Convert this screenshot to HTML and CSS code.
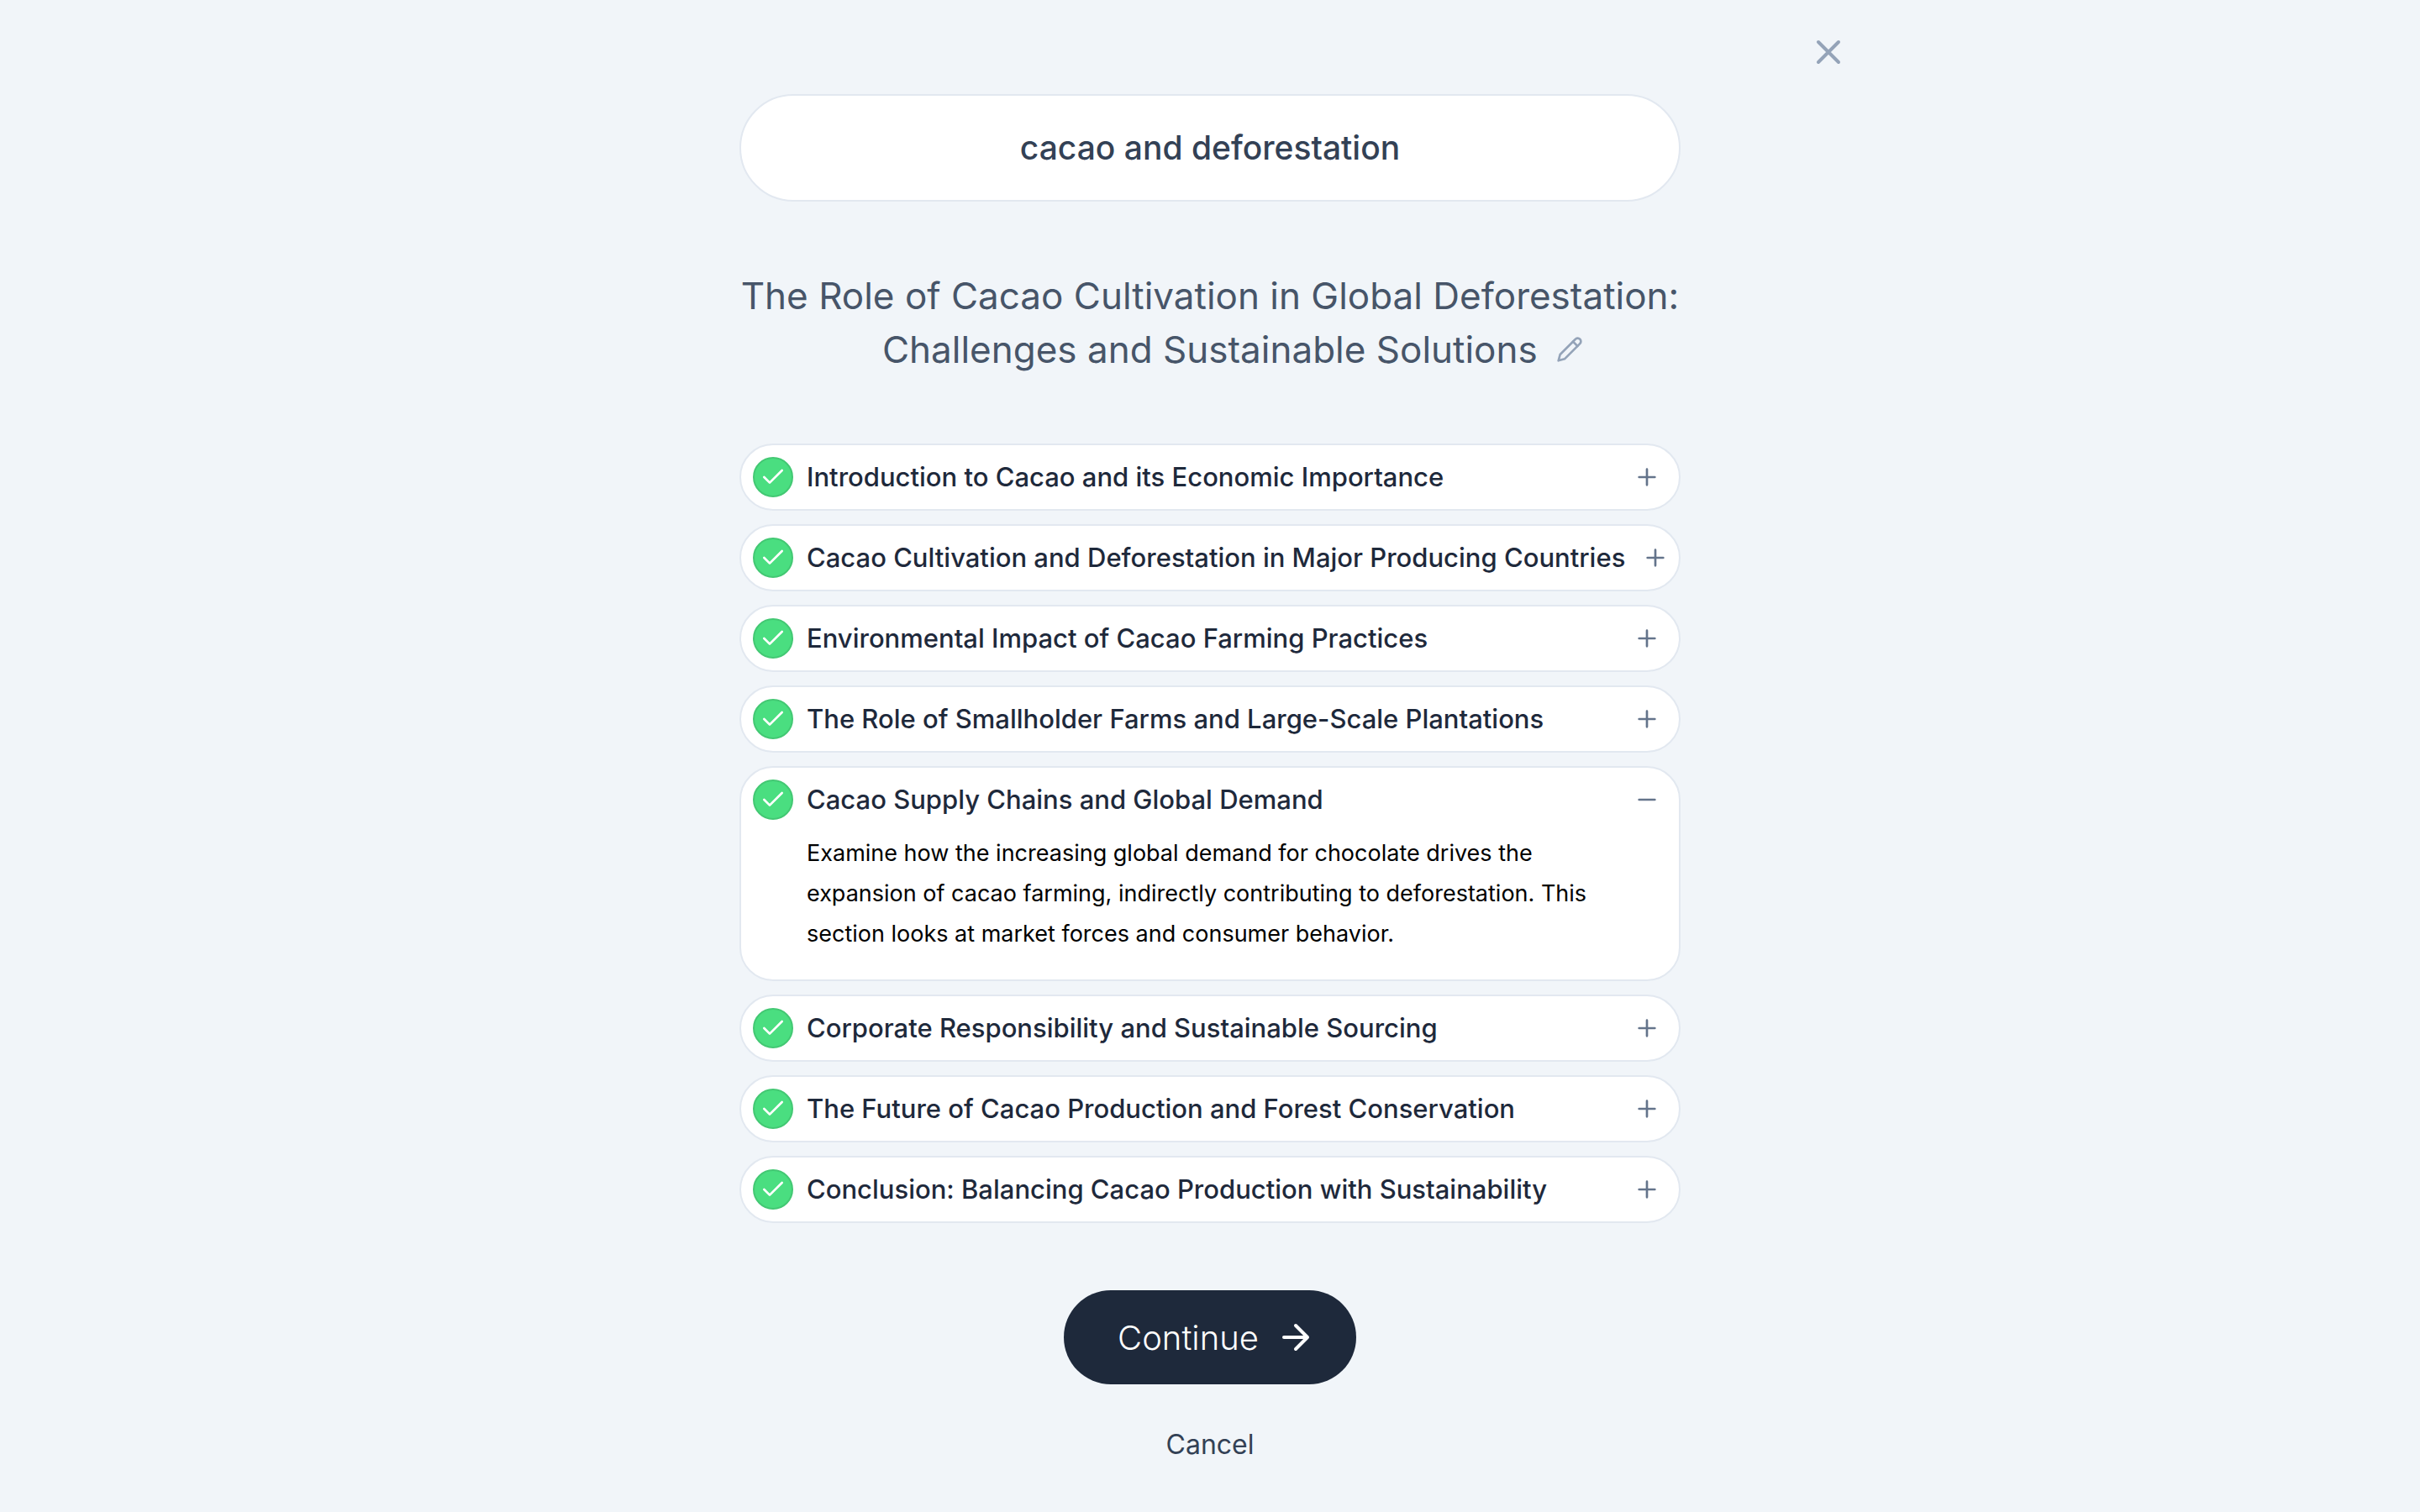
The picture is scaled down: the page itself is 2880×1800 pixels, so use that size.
FILE: index.html
```html
<!DOCTYPE html>
<html lang="en">
<head>
<meta charset="utf-8">
<meta name="viewport" content="width=device-width, initial-scale=1">
<title>Outline</title>
<link rel="stylesheet" href="styles.css">
</head>
<body>
<svg class="sprite" aria-hidden="true">
  <symbol id="check" viewBox="0 0 24 24"><path d="M20 6 9 17l-5-5"/></symbol>
  <symbol id="plus" viewBox="0 0 24 24"><path d="M5 12h14M12 5v14"/></symbol>
  <symbol id="minus" viewBox="0 0 24 24"><path d="M5 12h14"/></symbol>
</svg>
<div class="dialog">
  <header class="dialog-bar">
    <button class="icon-button close" type="button" aria-label="Close">
      <svg class="icon icon-lg" viewBox="0 0 24 24"><path d="M18 6 6 18M6 6l12 12"/></svg>
    </button>
  </header>
  <main class="content">
    <input class="topic" type="text" aria-label="Topic" value="cacao and deforestation">
    <h1 class="title">The Role of Cacao Cultivation in Global Deforestation: Challenges and Sustainable Solutions
      <button class="icon-button edit" type="button" aria-label="Edit title"><svg class="icon" viewBox="0 0 24 24"><path d="M17 3a2.85 2.83 0 1 1 4 4L7.5 20.5 2 22l1.5-5.5Z"/><path d="m15 5 4 4"/></svg></button>
    </h1>
    <ul class="sections">
      <li class="section"><div class="section-head"><button class="tick" type="button" aria-label="Included"><svg class="icon"><use href="#check"/></svg></button><h2 class="section-name">Introduction to Cacao and its Economic Importance</h2><button class="icon-button toggle" type="button" aria-label="Expand"><svg class="icon"><use href="#plus"/></svg></button></div></li>
      <li class="section"><div class="section-head"><button class="tick" type="button" aria-label="Included"><svg class="icon"><use href="#check"/></svg></button><h2 class="section-name">Cacao Cultivation and Deforestation in Major Producing Countries</h2><button class="icon-button toggle" type="button" aria-label="Expand"><svg class="icon"><use href="#plus"/></svg></button></div></li>
      <li class="section"><div class="section-head"><button class="tick" type="button" aria-label="Included"><svg class="icon"><use href="#check"/></svg></button><h2 class="section-name">Environmental Impact of Cacao Farming Practices</h2><button class="icon-button toggle" type="button" aria-label="Expand"><svg class="icon"><use href="#plus"/></svg></button></div></li>
      <li class="section"><div class="section-head"><button class="tick" type="button" aria-label="Included"><svg class="icon"><use href="#check"/></svg></button><h2 class="section-name">The Role of Smallholder Farms and Large-Scale Plantations</h2><button class="icon-button toggle" type="button" aria-label="Expand"><svg class="icon"><use href="#plus"/></svg></button></div></li>
      <li class="section"><div class="section-head"><button class="tick" type="button" aria-label="Included"><svg class="icon"><use href="#check"/></svg></button><h2 class="section-name">Cacao Supply Chains and Global Demand</h2><button class="icon-button toggle" type="button" aria-label="Collapse" aria-expanded="true"><svg class="icon"><use href="#minus"/></svg></button></div>
        <p class="section-text">Examine how the increasing global demand for chocolate drives the expansion of cacao farming, indirectly contributing to deforestation. This section looks at market forces and consumer behavior.</p></li>
      <li class="section"><div class="section-head"><button class="tick" type="button" aria-label="Included"><svg class="icon"><use href="#check"/></svg></button><h2 class="section-name">Corporate Responsibility and Sustainable Sourcing</h2><button class="icon-button toggle" type="button" aria-label="Expand"><svg class="icon"><use href="#plus"/></svg></button></div></li>
      <li class="section"><div class="section-head"><button class="tick" type="button" aria-label="Included"><svg class="icon"><use href="#check"/></svg></button><h2 class="section-name">The Future of Cacao Production and Forest Conservation</h2><button class="icon-button toggle" type="button" aria-label="Expand"><svg class="icon"><use href="#plus"/></svg></button></div></li>
      <li class="section"><div class="section-head"><button class="tick" type="button" aria-label="Included"><svg class="icon"><use href="#check"/></svg></button><h2 class="section-name">Conclusion: Balancing Cacao Production with Sustainability</h2><button class="icon-button toggle" type="button" aria-label="Expand"><svg class="icon"><use href="#plus"/></svg></button></div></li>
    </ul>
    <div class="actions">
      <button class="continue" type="button">Continue<svg class="icon icon-lg" viewBox="0 0 24 24"><path d="M5 12h14M12 5l7 7-7 7"/></svg></button>
      <button class="cancel" type="button">Cancel</button>
    </div>
  </main>
</div>
</body>
</html>
```
FILE: styles.css
```css
* { box-sizing: border-box; }

body {
  margin: 0;
  background: #f1f5f9;
  color: #000;
  font-family: Inter, "Liberation Sans", sans-serif;
  font-size: 27px;
}

button, input { font: inherit; }
button { border: 0; padding: 0; background: none; cursor: pointer; }
h1, h2, p, ul { margin: 0; padding: 0; }

.sprite { display: none; }

.icon {
  display: block;
  width: 32px;
  height: 32px;
  flex: none;
  fill: none;
  stroke: currentColor;
  stroke-width: 2;
  stroke-linecap: round;
  stroke-linejoin: round;
}
.icon-lg { width: 48px; height: 48px; }
.icon-button { flex: none; color: #94a3b8; }

.dialog { max-width: 1536px; margin: 0 auto; padding: 38px 8px; }
.dialog-bar { display: flex; justify-content: flex-end; }

.content {
  max-width: 1120px;
  margin: 26px auto 0;
  display: flex;
  flex-direction: column;
}

.topic {
  width: 100%;
  height: 128px;
  padding: 0 48px 2px;
  border: 2px solid #e2e8f0;
  border-radius: 64px;
  background: #fff;
  color: #334155;
  font-size: 39px;
  font-weight: 500;
  text-align: center;
}

.title {
  margin-top: 80px;
  color: #475569;
  font-size: 44px;
  font-weight: 400;
  line-height: 64px;
  text-align: center;
}
/* The pencil hangs past the end of the line so the title text stays centred. */
.edit { display: inline-block; margin: 0 -54px 0 10px; }

.sections {
  margin-top: 80px;
  display: flex;
  flex-direction: column;
  gap: 16px;
  list-style: none;
}
.section {
  padding: 14px;
  border: 2px solid #e2e8f0;
  border-radius: 40px;
  background: #fff;
}
.section-head {
  display: flex;
  align-items: center;
  height: 48px;
  padding-right: 8px;
}
.tick {
  display: grid;
  place-items: center;
  flex: none;
  width: 48px;
  height: 48px;
  margin-right: 16px;
  border: 2px solid #43c873;
  border-radius: 50%;
  background: #4ade80;
  color: #fff;
}
.section-name {
  flex: 1 0 auto;
  color: #1e293b;
  font-size: 31px;
  font-weight: 500;
  line-height: 48px;
  white-space: nowrap;
}
.toggle { margin-left: 20px; color: #64748b; }
.section-text { padding: 16px 64px; line-height: 48px; }

.actions {
  margin-top: 80px;
  display: flex;
  flex-direction: column;
  align-items: center;
  gap: 48px;
}
.continue {
  display: flex;
  align-items: center;
  gap: 20px;
  height: 112px;
  padding: 0 48px 0 64px;
  border-radius: 56px;
  background: #1e293b;
  color: #fff;
  font-size: 40px;
  font-weight: 300;
}
.cancel { color: #334155; font-size: 32px; line-height: 48px; }
```
